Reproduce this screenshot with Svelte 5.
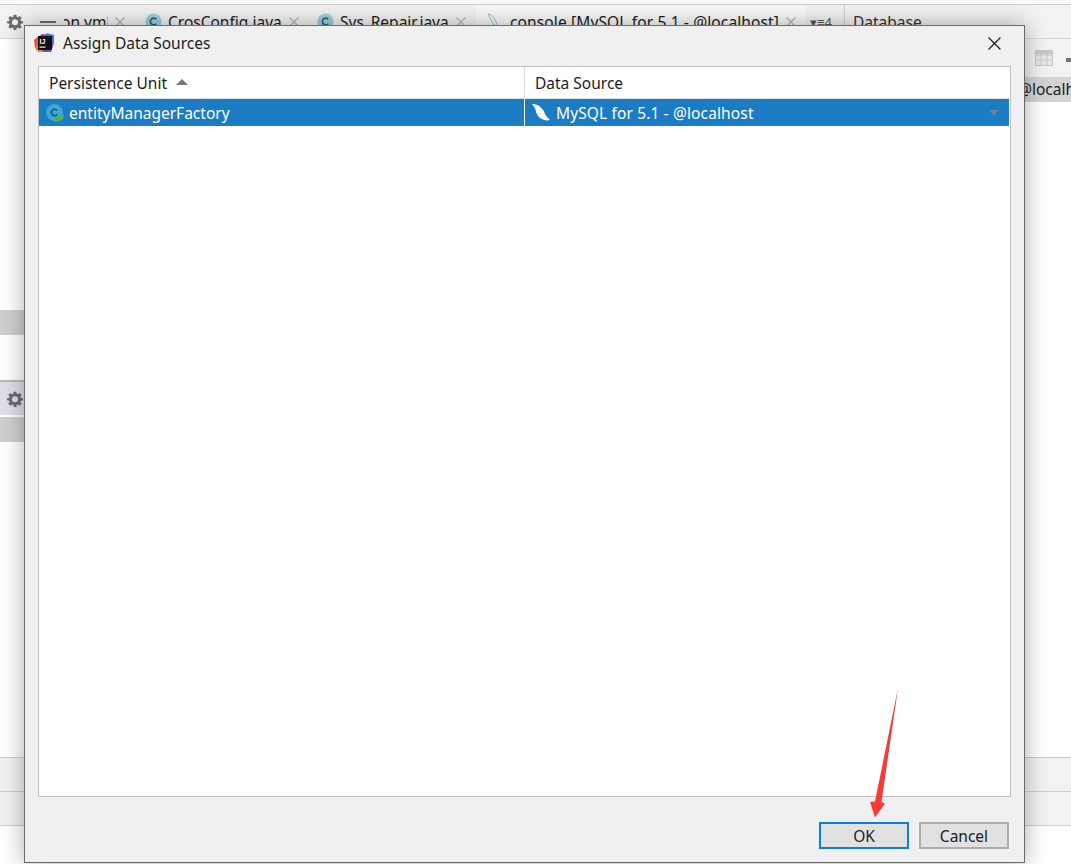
<script>
	const tabs = [
		{ name: "CrosConfig.java", width: 172 },
		{ name: "Sys_Repair.java", width: 159 }
	];
	const columns = ["Persistence Unit", "Data Source"];
</script>

{#snippet gear(cls)}
	<svg class={cls} viewBox="0 0 24 24" aria-hidden="true">
		<path
			fill="#6e6e6e"
			fill-rule="evenodd"
			d="M10 1h4l.6 3.1 1.9.8L19.1 3l2.9 2.9-1.9 2.6.8 1.9L24 11v3l-3.1.6-.8 1.9 1.9 2.6-2.9 2.9-2.6-1.9-1.9.8L14 24h-4l-.6-3.1-1.9-.8L4.900 22 2 19.100l1.900-2.600-.8-1.900L0 14v-3l3.100-.6.8-1.900L2 5.900 4.900 3l2.600 1.900 1.900-.8zM12 8a4.500 4.500 0 1 0 0 9 4.500 4.500 0 0 0 0-9z"
		/>
	</svg>
{/snippet}

{#snippet classIcon()}
	<svg class="tab-icon" viewBox="0 0 18 18" aria-hidden="true">
		<circle cx="9" cy="9" r="8.500" fill="#9bcfe2" />
		<path d="M12 6.600a3.600 3.600 0 1 0 0 4.800" fill="none" stroke="#3f5b66" stroke-width="1.700" />
	</svg>
{/snippet}

{#snippet close()}
	<svg class="tab-close" viewBox="0 0 10 10" aria-hidden="true">
		<path d="M0.500 0.500l9 9M9.500 0.500l-9 9" stroke="#b4b4b4" stroke-width="1.200" />
	</svg>
{/snippet}

<div class="ide">
	<div class="top-strip"></div>
	<div class="tabbar">
		<div class="tabs">
			{@render gear("tool-gear")}
			<span class="dash"></span>
			<div class="tab first"><span class="clipped">on.yml</span>{@render close()}</div>
			{#each tabs as tab}
				<div class="tab" style="width: {tab.width}px">
					{@render classIcon()}
					<span>{tab.name}</span>
					{@render close()}
				</div>
			{/each}
			<div class="tab active">
				<svg class="tab-icon small" viewBox="0 0 12 18" aria-hidden="true">
					<path d="M1 1c5 1 8 6 10 14-3-3-5-2-6-5C4 7 2 4 1 1z" fill="none" stroke="#8fb8cc" stroke-width="1" />
				</svg>
				<span class="wide">console [MySQL for 5.1 - @localhost]</span>
				{@render close()}
			</div>
			<div class="overflow">▾≡4</div>
		</div>
		<div class="panel-title">Database</div>
	</div>
	<div class="workspace">
		<div class="editor">
			<div class="band b1"></div>
			<div class="gear-band">{@render gear("side-gear")}</div>
			<div class="band b2"></div>
			<div class="status-rows">
				<div class="status-row"></div>
				<div class="status-row"></div>
			</div>
		</div>
		<div class="db-panel">
			<div class="db-toolbar">
				<svg class="grid-icon" viewBox="0 0 18 16" aria-hidden="true">
					<rect x="0.500" y="0.500" width="17" height="15" fill="#e8e8e8" stroke="#c6c6c6" />
					<path d="M0 5h18M0 10h18M6 0v16M12 0v16" stroke="#c6c6c6" />
					<rect x="0" y="0" width="18" height="4" fill="#c6c6c6" />
				</svg>
				<span class="tool-stub"></span>
			</div>
			<div class="db-row">@localh</div>
		</div>
	</div>
</div>

<div class="dialog">
	<div class="titlebar">
		<svg class="app-logo" viewBox="0 0 20 20" aria-hidden="true">
			<path d="M2 6l6-5 11 1 1 8-3 9-7 0-8-2z" fill="#8a3fc0" />
			<path d="M0 7l5-4 3 9-2 6-5-3z" fill="#f0503c" />
			<path d="M12 0l8 2v8l-5-3z" fill="#3a78e0" />
			<path d="M1 14l5-3 3 8-5 0z" fill="#ee8a20" />
			<rect x="4" y="3" width="14" height="14" fill="#111" />
			<text x="5.500" y="10.500" class="logo-text">IJ</text>
			<rect x="5.500" y="13.500" width="6" height="1.200" fill="#eee" />
		</svg>
		<span class="title">Assign Data Sources</span>
		<button class="close-btn" aria-label="Close">
			<svg viewBox="0 0 12 12" aria-hidden="true">
				<path d="M0.500 0.500l11 11M11.500 0.500l-11 11" stroke="#222" stroke-width="1.200" />
			</svg>
		</button>
	</div>

	<div class="table">
		<div class="thead">
			<div class="th first-col">{columns[0]}<span class="sort"></span></div>
			<div class="th">{columns[1]}</div>
		</div>
		<div class="row">
			<div class="cell first-col">
				<svg class="row-icon" viewBox="0 0 18 18" aria-hidden="true">
					<circle cx="8.500" cy="8.500" r="8.500" fill="#3ea6d4" />
					<path d="M11 6.400a3.200 3.200 0 1 0 0 4.200" fill="none" stroke="#24505f" stroke-width="1.600" />
					<path d="M8 18c0-5 4-7 10-7 0 5-4 7-10 7z" fill="#4fae5c" />
				</svg>
				entityManagerFactory
			</div>
			<div class="cell source">
				<svg class="row-icon fish" viewBox="0 0 18 18" aria-hidden="true">
					<path d="M0 0c4 0 7 1 9 4 2 1 3 3 4 6 1 2 3 4 5 6-3 1-6 0-8-1C7 14 5 11 4 8 4 5 2 3 0 0z" fill="#fff" />
				</svg>
				<span class="wide">MySQL for 5.1 - @localhost</span>
				<span class="combo"></span>
			</div>
		</div>
	</div>

	<div class="footer">
		<button class="btn default">OK</button>
		<button class="btn">Cancel</button>
	</div>
</div>

<svg class="arrow" viewBox="0 0 1071 864" aria-hidden="true">
	<path d="M898 688 881.500 802 885 803.500 875 817.500 870 802 875 801.500z" fill="#f73b3b" />
</svg>

<style>
	:global(body) {
		background: #fff;
		font-family: "Noto Sans", "Open Sans", sans-serif;
		color: #1c1c1c;
		overflow: hidden;
	}

	.ide {
		height: 864px;
		display: flex;
		flex-direction: column;
		font-size: 15.500px;
	}

	.top-strip {
		height: 4px;
		background: #fafafa;
		border-bottom: 1px solid #cbcbcb;
	}

	.tabbar {
		height: 33px;
		display: flex;
		background: #f2f2f2;
		border-bottom: 1px solid #d6d6d6;
		box-sizing: content-box;
	}

	.tabs {
		width: 844px;
		display: flex;
		align-items: center;
		border-right: 1px solid #cfcfcf;
	}

	.tool-gear {
		width: 16px;
		height: 16px;
		margin-left: 7px;
		flex: none;
	}

	.dash {
		width: 16px;
		height: 2px;
		background: #6e6e6e;
		margin-left: 17px;
		flex: none;
	}

	.tab {
		height: 100%;
		display: flex;
		align-items: center;
		flex: none;
		box-sizing: border-box;
		white-space: nowrap;
	}

	.tab.first {
		width: 89px;
		padding-left: 8px;
	}

	/* the first tab is scrolled partly out of the strip */
	.clipped {
		width: 44px;
		overflow: hidden;
		text-indent: -3px;
	}

	.wide {
		letter-spacing: 0.13px;
	}

	.tab-icon {
		width: 17px;
		height: 17px;
		margin: 0 6px 0 0;
		flex: none;
	}

	.tab-icon.small {
		width: 12px;
		margin-right: 11px;
	}

	.tab-close {
		width: 10px;
		height: 10px;
		margin-left: 7px;
		flex: none;
	}

	.tab.active {
		width: 329px;
		padding-left: 11px;
		background: #f9f9f9;
	}

	.overflow {
		font-size: 13px;
		color: #555;
		margin-left: 5px;
		white-space: nowrap;
	}

	.panel-title {
		padding-left: 8px;
		line-height: 35px;
		color: #333;
	}

	.workspace {
		flex: 1;
		display: flex;
	}

	.editor {
		width: 845px;
		display: flex;
		flex-direction: column;
	}

	.band {
		height: 25px;
		background: #d0d0d0;
		flex: none;
	}

	.b1 {
		margin-top: 271px;
	}

	.b2 {
		margin-top: 2px;
	}

	.gear-band {
		margin-top: 45px;
		height: 35px;
		background: #dde0e8;
		border-top: 2px solid #b8b8b8;
		box-sizing: border-box;
		display: flex;
		align-items: center;
		flex: none;
	}

	.side-gear {
		width: 16px;
		height: 16px;
		margin-left: 7px;
	}

	.status-rows {
		margin-top: 315px;
		border-top: 1px solid #cdcdcd;
		margin-right: -226px;
	}

	.status-row {
		height: 33px;
		background: #f2f2f2;
		border-bottom: 1px solid #cdcdcd;
	}

	.db-panel {
		flex: 1;
		border-left: 1px solid #cfcfcf;
		display: flex;
		flex-direction: column;
		min-width: 0;
		position: relative;
		height: 64px;
	}

	.db-toolbar {
		height: 38px;
		background: #f2f2f2;
		display: flex;
		align-items: center;
		justify-content: flex-end;
		gap: 13px;
		box-sizing: border-box;
	}

	.grid-icon {
		width: 18px;
		height: 16px;
	}

	.tool-stub {
		width: 5px;
		height: 4px;
		background: #777;
		margin-top: 4px;
	}

	.db-row {
		height: 25px;
		line-height: 25px;
		background: #d4d4d4;
		padding-left: 172px;
		white-space: nowrap;
		overflow: hidden;
	}

	.dialog {
		position: absolute;
		left: 24px;
		top: 25px;
		width: 1001px;
		height: 838px;
		box-sizing: border-box;
		background: #f0f0f0;
		border: 1px solid #6a6a6a;
		box-shadow: 0 0 22px rgba(0, 0, 0, 0.32);
		display: flex;
		flex-direction: column;
		padding: 0 13px;
		font-size: 15.500px;
	}

	.titlebar {
		height: 40px;
		flex: none;
		display: flex;
		align-items: center;
		box-sizing: border-box;
		margin: 0 -13px;
		padding: 0 0 6px 9px;
	}

	.app-logo {
		width: 20px;
		height: 20px;
		margin-right: 9px;
	}

	.logo-text {
		font-size: 7px;
		font-weight: 700;
		fill: #fff;
		font-family: "Liberation Sans", sans-serif;
	}

	.title {
		flex: 1;
	}

	.close-btn {
		width: 13px;
		height: 13px;
		margin-right: 23px;
		padding: 0;
		border: none;
		background: none;
	}

	.close-btn svg {
		display: block;
	}

	.table {
		flex: 1;
		background: #fff;
		border: 1px solid #c0c0c0;
		display: flex;
		flex-direction: column;
	}

	.thead {
		display: flex;
		height: 32px;
		flex: none;
		border-bottom: 1px solid #dcdcdc;
		box-sizing: border-box;
	}

	.th {
		flex: 1;
		display: flex;
		align-items: center;
		padding-left: 10px;
	}

	.first-col {
		width: 486px;
		flex: none;
		box-sizing: border-box;
		border-right: 1px solid #dcdcdc;
	}

	.sort {
		width: 0;
		height: 0;
		border-left: 6px solid transparent;
		border-right: 6px solid transparent;
		border-bottom: 6px solid #777;
		margin: 0 0 1px 9px;
	}

	.row {
		display: flex;
		height: 27px;
		margin-right: 1px;
		background: #1b7cc4;
		color: #fff;
		flex: none;
	}

	.cell {
		display: flex;
		align-items: center;
		white-space: nowrap;
	}

	.cell.first-col {
		padding-left: 7px;
		border-right-color: #fff;
	}

	.source {
		flex: 1;
		padding-left: 7px;
	}

	.row-icon {
		width: 18px;
		height: 18px;
		margin-right: 5px;
	}

	.fish {
		margin-right: 6px;
	}

	.combo {
		margin-left: auto;
		margin-right: 10px;
		width: 0;
		height: 0;
		border-left: 5px solid transparent;
		border-right: 5px solid transparent;
		border-top: 6px solid #6f8391;
	}

	.footer {
		height: 65px;
		flex: none;
		display: flex;
		justify-content: flex-end;
		align-items: flex-start;
		gap: 10px;
		padding: 25px 2px 0 0;
		box-sizing: border-box;
	}

	.btn {
		width: 90px;
		height: 27px;
		padding: 0;
		background: #e1e1e1;
		border: 2px solid #adadad;
		font: inherit;
		color: #1c1c1c;
	}

	.btn.default {
		border-color: #0a80d8;
	}

	.arrow {
		position: absolute;
		left: 0;
		top: 0;
		width: 1071px;
		height: 864px;
		pointer-events: none;
	}
</style>
